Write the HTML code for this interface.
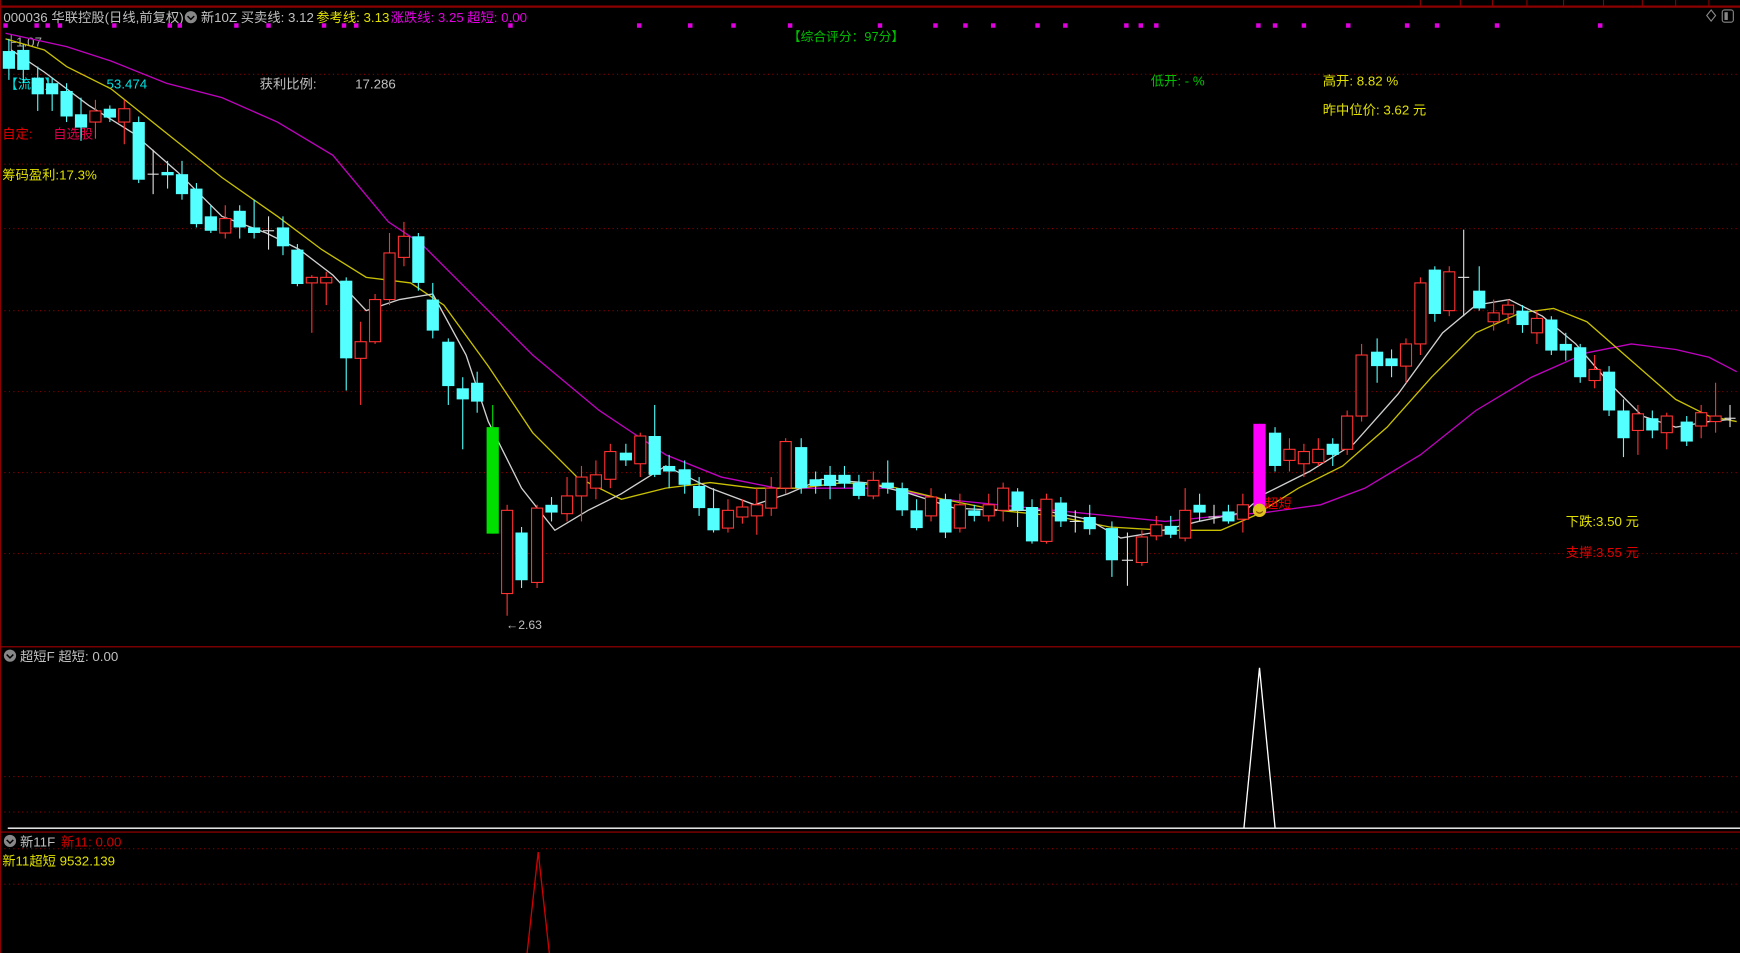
<!DOCTYPE html>
<html><head><meta charset="utf-8"><style>
html,body{margin:0;padding:0;background:#000;overflow:hidden}
svg{display:block}
text{font-family:"Liberation Sans","Noto Sans CJK SC",sans-serif}
</style></head><body>
<svg id="s" width="1740" height="953" viewBox="0 0 1568 859" preserveAspectRatio="none" xmlns="http://www.w3.org/2000/svg">
<rect width="1568" height="859" fill="#000"/>
<g id="grid"></g>
<!-- top bar -->
<line x1="0" y1="6" x2="1568" y2="6" stroke="#8b0000" stroke-width="2"/>
<g stroke="#8b0000" stroke-width="1">
<line x1="1280" y1="0" x2="1280" y2="6"/><line x1="1316" y1="0" x2="1316" y2="6"/><line x1="1345" y1="0" x2="1345" y2="6"/><line x1="1376" y1="0" x2="1376" y2="6"/><line x1="1409" y1="0" x2="1409" y2="6"/><line x1="1445" y1="0" x2="1445" y2="6"/><line x1="1480" y1="0" x2="1480" y2="6"/><line x1="1510" y1="0" x2="1510" y2="6"/><line x1="1540" y1="0" x2="1540" y2="6"/>
</g>
<g font-size="12">
<text x="3" y="20" fill="#c0c0c0">000036 华联控股(日线,前复权)</text>
<circle cx="172" cy="15.5" r="5.5" fill="#888"/><path d="M169 14.5l3 3 3-3" stroke="#000" stroke-width="1.3" fill="none"/>
<text x="181" y="20" fill="#c0c0c0">新10Z  买卖线: 3.12</text>
<text x="285" y="20" fill="#e0e000">参考线: 3.13</text>
<text x="352" y="20" fill="#e000e0">涨跌线: 3.25</text>
<text x="421" y="20" fill="#e000e0">超短: 0.00</text>
<text x="710" y="37" fill="#00c000" font-size="11.5">【综合评分：97分】</text>
<text x="6" y="42" fill="#aaa">├1.07</text>
<text x="4" y="80" fill="#00e0e0">【流值】</text>
<text x="96" y="80" fill="#00e0e0">53.474</text>
<text x="234" y="80" fill="#c0c0c0">获利比例:</text>
<text x="320" y="80" fill="#c0c0c0">17.286</text>
<text x="2" y="125" fill="#e00000">自定:</text>
<text x="48" y="125" fill="#e0004a">自选股</text>
<text x="2" y="162" fill="#e0e000">筹码盈利:17.3%</text>
<text x="1037" y="77" fill="#00c000">低开: - %</text>
<text x="1192" y="77" fill="#e0e000">高开: 8.82 %</text>
<text x="1192" y="103" fill="#e0e000">昨中位价: 3.62 元</text>
<text x="1411" y="474" fill="#e0e000">下跌:3.50 元</text>
<text x="1411" y="502" fill="#e00000">支撑:3.55 元</text>
<text x="456" y="567" fill="#c0c0c0" font-size="11">←2.63</text>
</g>
<path d="M1542 9l4 5-4 5-4-5z" stroke="#888" fill="none"/>
<rect x="1552" y="9" width="10" height="11" rx="2" stroke="#888" fill="none"/><rect x="1554" y="11" width="3" height="7" fill="#888"/>
<g id="dots" fill="#e000e0"></g>
<g id="ma" fill="none" stroke-width="1.2"></g>
<g id="cd"></g>
<text x="1140" y="458" fill="#e00000" font-size="12">超短</text>
<circle cx="1135" cy="460" r="6" fill="#e0c020"/><path d="M1132 461q3 3 6 0" stroke="#805000" fill="none"/>
<!-- panel separators -->
<line x1="0" y1="583" x2="1568" y2="583" stroke="#a00000"/>
<line x1="0" y1="750" x2="1568" y2="750" stroke="#a00000"/>
<g font-size="12">
<circle cx="9" cy="591" r="5.5" fill="#888"/><path d="M6 590l3 3 3-3" stroke="#000" stroke-width="1.3" fill="none"/>
<text x="18" y="596" fill="#c0c0c0">超短F  超短: 0.00</text>
<circle cx="9" cy="758" r="5.5" fill="#888"/><path d="M6 757l3 3 3-3" stroke="#000" stroke-width="1.3" fill="none"/>
<text x="18" y="763" fill="#c0c0c0">新11F</text>
<text x="55" y="763" fill="#d00000">新11: 0.00</text>
<text x="2" y="780" fill="#e0e000">新11超短 9532.139</text>
</g>
<line x1="7" y1="746.5" x2="1568" y2="746.5" stroke="#fff" stroke-width="1.2"/>
<path d="M1121 746L1135 602L1149 746" stroke="#fff" fill="none" stroke-width="1.2"/>
<path d="M475 859L485 768L495 859" stroke="#d00000" fill="none" stroke-width="1.2"/>
</svg>
<script>
var NS="http://www.w3.org/2000/svg";
function el(p,t,a){var e=document.createElementNS(NS,t);for(var k in a)e.setAttribute(k,a[k]);document.getElementById(p).appendChild(e);return e;}
[67,148,206,280,353,426,499,700,732,765,797,860].forEach(function(y){el("grid","line",{x1:0,y1:y,x2:1568,y2:y,stroke:"#8b0000","stroke-dasharray":"1 3"});});
el("grid","line",{x1:0.5,y1:0,x2:0.5,y2:859,stroke:"#8b0000"});
[5,33,43,54,103,153,162,213,242,292,310,321,460,576,622,661,712,793,843,870,895,935,960,1015,1028,1042,1134,1149,1175,1215,1268,1295,1349,1442].forEach(function(x){el("dots","rect",{x:x-2,y:21,width:4,height:4});});
function pl(c,pts){el("ma","polyline",{stroke:c,points:pts});}
pl("#c000c0","5,30 60,42 100,55 150,75 200,88 250,110 300,140 350,200 380,220 420,260 480,320 540,370 600,410 650,430 700,440 750,440 800,440 850,450 900,455 950,460 1000,465 1050,470 1100,465 1140,462 1190,455 1230,440 1280,410 1330,370 1380,340 1430,318 1470,310 1510,315 1540,322 1565,335");
pl("#c8c000","5,35 40,45 60,60 100,80 150,120 200,160 250,195 290,225 330,250 370,255 400,275 440,330 480,390 520,430 560,450 600,440 640,435 680,440 720,440 760,435 800,438 850,450 900,460 950,465 1000,475 1050,478 1100,478 1130,465 1170,440 1210,420 1250,385 1290,340 1330,300 1370,282 1400,278 1430,290 1470,325 1510,360 1540,375 1565,380");
pl("#d0d0d0","10,45 40,65 80,95 120,120 160,155 200,195 240,210 270,225 300,248 330,280 360,270 390,265 420,320 440,380 470,440 500,478 530,460 560,445 600,420 640,440 680,455 710,445 740,432 780,435 820,445 860,458 900,460 940,460 980,468 1010,485 1040,480 1080,470 1120,462 1140,445 1180,425 1220,400 1260,355 1300,300 1330,275 1360,270 1390,285 1420,310 1450,345 1480,375 1510,385 1540,380 1560,378");
var C=[[8,'c',46,62,35,72],[21,'c',45,63,40,75],[34,'c',70,85,60,100],[47,'c',75,85,70,100],[60,'c',82,105,75,110],[73,'c',103,115,88,127],[86,'r',100,110,90,125],[99,'c',98,106,95,110],[112,'r',98,110,90,130],[125,'c',110,162,105,165],[138,'w',157,157,135,175],[151,'c',155,158,145,170],[164,'c',157,175,145,180],[177,'c',170,202,165,205],[190,'c',195,208,185,210],[203,'r',197,210,185,215],[216,'c',190,205,185,215],[229,'c',205,210,180,215],[242,'w',208,208,195,225],[255,'c',205,222,195,230],[268,'c',225,256,220,258],[281,'r',250,255,248,300],[294,'r',250,255,245,275],[312,'c',253,323,250,352],[325,'r',308,323,290,365],[338,'r',270,308,265,310],[351,'r',228,270,210,275],[364,'r',213,232,200,240],[377,'c',213,255,210,262],[390,'c',270,298,255,305],[404,'c',308,348,305,365],[417,'c',350,360,340,405],[430,'c',345,362,335,372],[444,'g',385,481,365,481],[457,'r',460,535,455,555],[470,'c',480,523,475,530],[484,'r',458,525,455,530],[497,'c',455,462,448,470],[511,'r',447,463,430,470],[524,'r',430,447,420,470],[537,'r',428,440,415,450],[550,'r',407,432,400,440],[564,'c',408,415,400,420],[577,'r',393,418,390,430],[590,'c',393,428,365,430],[603,'c',420,425,410,440],[617,'c',423,437,415,445],[630,'c',438,458,430,465],[643,'c',458,478,440,480],[656,'r',460,476,450,480],[669,'r',457,466,450,472],[682,'r',455,465,440,482],[695,'r',440,458,430,465],[708,'r',398,440,395,445],[722,'c',403,440,395,445],[735,'c',432,438,425,445],[748,'c',428,438,420,450],[761,'c',428,436,420,440],[774,'c',435,447,428,450],[787,'r',433,447,425,450],[800,'c',435,440,415,445],[813,'c',440,460,435,465],[826,'c',460,476,450,478],[839,'r',448,465,440,470],[852,'c',450,480,445,485],[865,'r',455,476,445,480],[878,'c',460,465,455,470],[891,'r',455,465,445,470],[904,'r',440,460,435,470],[917,'c',443,460,440,475],[930,'c',457,488,450,490],[943,'r',450,488,445,490],[956,'c',453,470,448,475],[969,'w',470,470,460,480],[982,'c',466,477,455,482],[1002,'c',476,505,470,520],[1016,'w',505,505,480,528],[1029,'r',484,507,478,510],[1042,'r',473,483,465,487],[1055,'c',474,482,465,485],[1068,'r',460,485,440,488],[1081,'c',455,462,445,470],[1094,'w',466,466,455,472],[1107,'c',461,470,455,472],[1120,'r',455,468,445,480],[1135,'m',382,460,382,460],[1149,'c',390,420,385,425],[1162,'r',405,415,395,425],[1175,'r',407,418,400,430],[1188,'r',405,417,395,420],[1201,'c',400,410,395,420],[1214,'r',375,405,370,410],[1227,'r',320,375,310,380],[1241,'c',317,330,305,345],[1254,'c',323,330,315,340],[1267,'r',310,330,305,345],[1280,'r',255,310,250,320],[1293,'c',243,283,240,290],[1306,'r',245,280,240,285],[1319,'w',250,250,207,285],[1333,'c',262,278,240,280],[1346,'r',282,290,270,298],[1359,'r',275,283,270,292],[1372,'c',280,293,275,300],[1385,'r',287,300,280,310],[1398,'c',288,316,285,320],[1411,'c',310,316,300,325],[1424,'c',313,340,310,345],[1437,'r',333,343,320,350],[1450,'c',335,370,330,375],[1463,'c',370,395,360,412],[1476,'r',373,388,365,410],[1489,'c',377,388,370,395],[1502,'r',375,390,372,405],[1520,'c',380,398,375,402],[1533,'r',372,384,365,395],[1546,'r',375,380,345,390],[1559,'w',377,377,365,385]];
var col={c:"#54ffff",r:"#ff3232",w:"#e0e0e0",g:"#00e000",m:"#ff00ff"};
C.forEach(function(d){var x=d[0],t=d[1],k=col[t];
el("cd","line",{x1:x,y1:d[4],x2:x,y2:d[5],stroke:k});
if(t=='w'){el("cd","line",{x1:x-5,y1:d[2],x2:x+5,y2:d[2],stroke:k});return;}
if(t=='r'){el("cd","rect",{x:x-5,y:d[2],width:10,height:Math.max(1,d[3]-d[2]),fill:"#000",stroke:k});}
else{el("cd","rect",{x:x-5.5,y:d[2],width:11,height:Math.max(2,d[3]-d[2]),fill:k});}
});
</script>
</body></html>
